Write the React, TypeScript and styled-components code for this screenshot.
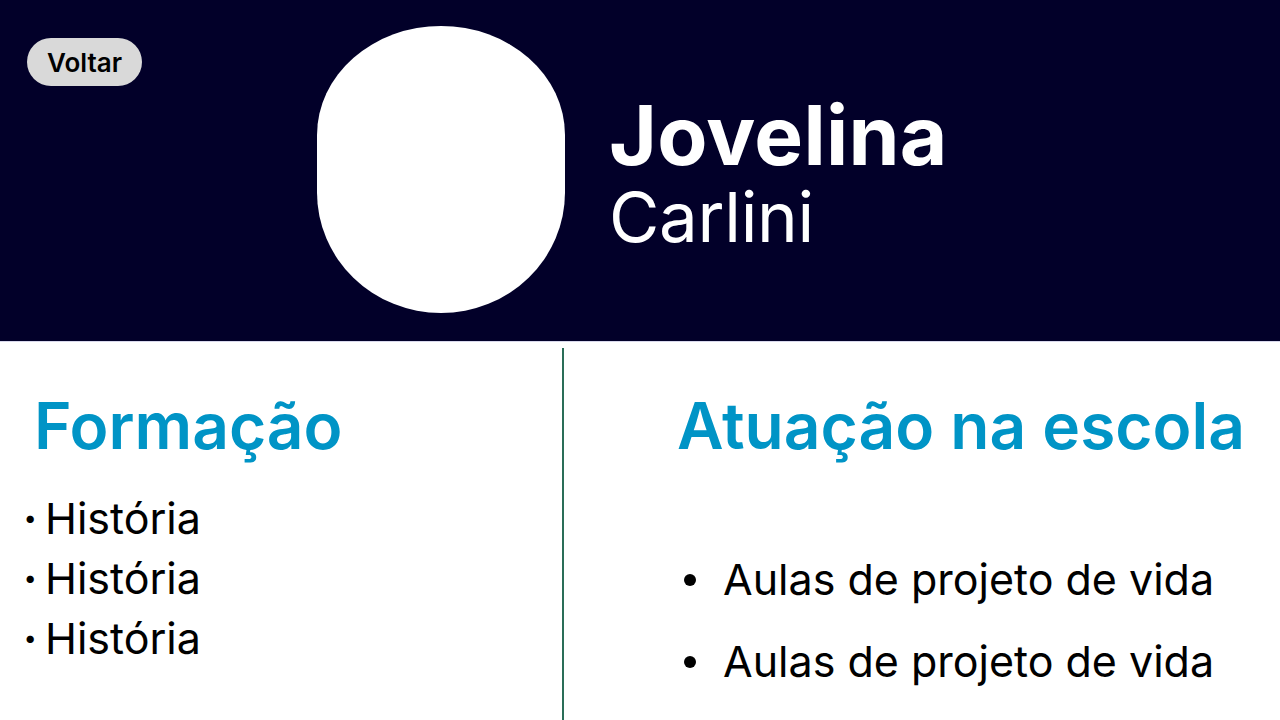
import React from "react";
import styled, { createGlobalStyle } from "styled-components";

const Global = createGlobalStyle`
  html, body { margin: 0; padding: 0; background: #ffffff; }
  body { font-family: Inter, "Noto Sans", sans-serif; overflow: hidden; }
  * { box-sizing: border-box; }
`;

const Page = styled.div`
  width: 1280px;
  height: 720px;
  display: flex;
  flex-direction: column;
  overflow: hidden;
`;

const Header = styled.header`
  height: 341px;
  flex: none;
  background: #020029;
  display: flex;
  align-items: flex-start;
  box-shadow: 0 1px 0 #d8d8ec;
`;

const BackButton = styled.button`
  margin: 38px 0 0 27px;
  width: 115px;
  height: 48px;
  border: none;
  border-radius: 24px;
  background: #d9d9d9;
  color: #000;
  font-family: Inter, sans-serif;
  font-weight: 600;
  font-size: 26px;
  padding: 0;
  cursor: pointer;
`;

const Avatar = styled.div`
  margin: 26px 0 0 175px;
  width: 248px;
  height: 287px;
  background: #ffffff;
  border-radius: 50% 50% 50% 50% / 38% 38% 42% 42%;
  flex: none;
`;

const NameBlock = styled.div`
  align-self: center;
  margin: 2px 0 0 44px;
  display: flex;
  flex-direction: column;
  color: #ffffff;
`;

const FirstName = styled.div`
  font-weight: 700;
  font-size: 82px;
  line-height: 90px;
  letter-spacing: 0.3px;
`;

const LastName = styled.div`
  font-weight: 400;
  font-size: 69px;
  line-height: 72px;
  letter-spacing: -0.3px;
`;

const Body = styled.main`
  flex: 1;
  display: grid;
  grid-template-columns: 562px 2px 1fr;
  padding-top: 7px;
`;

const Divider = styled.div`
  background: #2a6e58;
  width: 2px;
`;

const Column = styled.section``;

const Heading = styled.h2<{ $indent: number }>`
  margin: 46px 0 0 ${(p) => p.$indent}px;
  font-weight: 600;
  font-size: 64px;
  line-height: 64px;
  color: #0094c6;
  letter-spacing: 0;
`;

const DotList = styled.ul`
  list-style: none;
  margin: 30px 0 0 23px;
  padding: 0;
`;

const DotItem = styled.li`
  font-size: 43px;
  line-height: 60px;
  color: #000;
  display: flex;
  align-items: baseline;
  &::before {
    content: "·";
    font-weight: 700;
    width: 22px;
    flex: none;
  }
`;

const DiscList = styled.ul<{ $indent: number }>`
  margin: 80px 0 0 ${(p) => p.$indent}px;
  padding: 0;
  list-style: none;
`;

const DiscItem = styled.li`
  font-size: 43px;
  line-height: 82px;
  color: #000;
  display: flex;
  align-items: center;
  &::before {
    content: "";
    width: 12px;
    height: 12px;
    border-radius: 50%;
    background: #000;
    margin-right: 27px;
    flex: none;
    position: relative;
    top: 1px;
  }
`;

export default function App() {
  return (
    <Page>
      <Global />
      <Header>
        <BackButton>Voltar</BackButton>
        <Avatar />
        <NameBlock>
          <FirstName>Jovelina</FirstName>
          <LastName>Carlini</LastName>
        </NameBlock>
      </Header>
      <Body>
        <Column>
          <Heading $indent={34}>Formação</Heading>
          <DotList>
            <DotItem>História</DotItem>
            <DotItem>História</DotItem>
            <DotItem>História</DotItem>
          </DotList>
        </Column>
        <Divider />
        <Column>
          <Heading $indent={113}>Atuação na escola</Heading>
          <DiscList $indent={120}>
            <DiscItem>Aulas de projeto de vida</DiscItem>
            <DiscItem>Aulas de projeto de vida</DiscItem>
          </DiscList>
        </Column>
      </Body>
    </Page>
  );
}
